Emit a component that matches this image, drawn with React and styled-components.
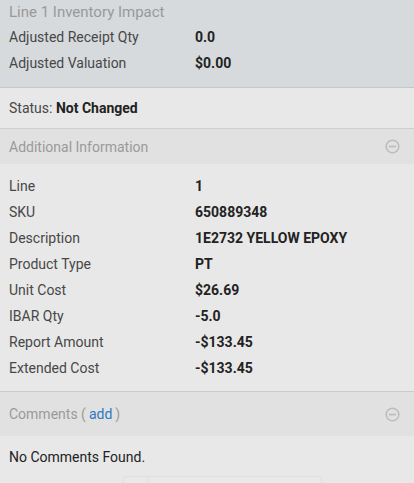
import React from "react";
import styled, { createGlobalStyle } from "styled-components";

const Global = createGlobalStyle`
  html, body { margin: 0; padding: 0; }
  body {
    background: #e8e8e8;
    font-family: Roboto, "Noto Sans", "Liberation Sans", sans-serif;
    font-size: 14px;
    color: #222;
    overflow: hidden;
  }
`;

const Page = styled.div`
  width: 414px;
  height: 483px;
  overflow: hidden;
  display: flex;
  flex-direction: column;
  & > * { flex-shrink: 0; }
`;

const ImpactSection = styled.section`
  background: #d7dadd;
  padding: 0 9px 11px;
  border-bottom: 1px solid #c6c9cc;
`;

const ImpactTitle = styled.div`
  height: 24px;
  line-height: 24px;
  color: #999;
  font-size: 15px;
`;

const InfoGrid = styled.div`
  display: grid;
  grid-template-columns: 186px 1fr;
`;

const Label = styled.div`
  height: 26px;
  line-height: 26px;
  color: #474747;
`;

const Value = styled.div`
  height: 26px;
  line-height: 26px;
  font-weight: 700;
  color: #222;
`;

const StatusBar = styled.div`
  height: 40px;
  line-height: 40px;
  padding: 0 9px;
  color: #474747;
  border-bottom: 1px solid #cfcfcf;
  b { color: #222; font-weight: 700; }
`;

const PanelHeader = styled.div`
  display: flex;
  align-items: center;
  justify-content: space-between;
  height: ${(p) => p.$h}px;
  padding: 0 14px 0 9px;
  background: #e1e1e1;
  color: #9a9a9a;
  font-size: 14px;
`;

const AddLink = styled.a`
  color: #2f78bd;
  text-decoration: none;
  margin: 0 3px;
`;

const PanelBody = styled.div`
  padding: ${(p) => p.$pad};
  border-bottom: ${(p) => (p.$border ? "1px solid #cbcbcb" : "none")};
`;

const BodyGrid = styled(InfoGrid)`
  padding: 0 9px;
`;

const Empty = styled.div`
  padding: 0 9px;
  height: 40px;
  line-height: 42px;
  color: #222;
`;

const FooterRow = styled.div`
  display: flex;
  justify-content: flex-start;
  padding-left: 123px;
`;

const GhostButton = styled.div`
  display: flex;
  align-items: stretch;
  width: 199px;
  height: 30px;
  border: 1px solid #dedede;
  border-radius: 3px;
  background: #e9e9e9;
  color: #bdbdbd;
  box-sizing: border-box;
`;

const IconCell = styled.span`
  width: 24px;
  display: flex;
  align-items: center;
  justify-content: center;
  border-right: 1px solid #dedede;
`;

const ButtonText = styled.span`
  padding-left: 10px;
  line-height: 28px;
  font-size: 14px;
`;

const CollapseIcon = () => (
  <svg width="15" height="15" viewBox="0 0 15 15">
    <circle cx="7.5" cy="7.5" r="6.3" fill="none" stroke="#bdbdbd" strokeWidth="1.6" />
    <rect x="4" y="6.7" width="7" height="1.7" fill="#bdbdbd" />
  </svg>
);

const impact = [
  ["Adjusted Receipt Qty", "0.0"],
  ["Adjusted Valuation", "$0.00"],
];

const info = [
  ["Line", "1"],
  ["SKU", "650889348"],
  ["Description", "1E2732 YELLOW EPOXY"],
  ["Product Type", "PT"],
  ["Unit Cost", "$26.69"],
  ["IBAR Qty", "-5.0"],
  ["Report Amount", "-$133.45"],
  ["Extended Cost", "-$133.45"],
];

export default function App() {
  return (
    <Page>
      <Global />
      <ImpactSection>
        <ImpactTitle>Line 1 Inventory Impact</ImpactTitle>
        <InfoGrid>
          {impact.map(([l, v]) => (
            <React.Fragment key={l}>
              <Label>{l}</Label>
              <Value>{v}</Value>
            </React.Fragment>
          ))}
        </InfoGrid>
      </ImpactSection>
      <StatusBar>
        Status: <b>Not Changed</b>
      </StatusBar>
      <PanelHeader $h={35}>
        <span>Additional Information</span>
        <CollapseIcon />
      </PanelHeader>
      <PanelBody $pad="9px 0 10px" $border>
        <BodyGrid>
          {info.map(([l, v]) => (
            <React.Fragment key={l}>
              <Label>{l}</Label>
              <Value>{v}</Value>
            </React.Fragment>
          ))}
        </BodyGrid>
      </PanelBody>
      <PanelHeader $h={44}>
        <span>
          Comments (<AddLink href="#">add</AddLink>)
        </span>
        <CollapseIcon />
      </PanelHeader>
      <PanelBody $pad="0">
        <Empty>No Comments Found.</Empty>
        <FooterRow>
          <GhostButton>
            <IconCell>
              <svg width="14" height="14" viewBox="0 0 14 14">
                <circle cx="7" cy="7" r="6" fill="none" stroke="#c4c4c4" strokeWidth="1.5" />
              </svg>
            </IconCell>
            <ButtonText>Back to Line Items</ButtonText>
          </GhostButton>
        </FooterRow>
      </PanelBody>
    </Page>
  );
}
